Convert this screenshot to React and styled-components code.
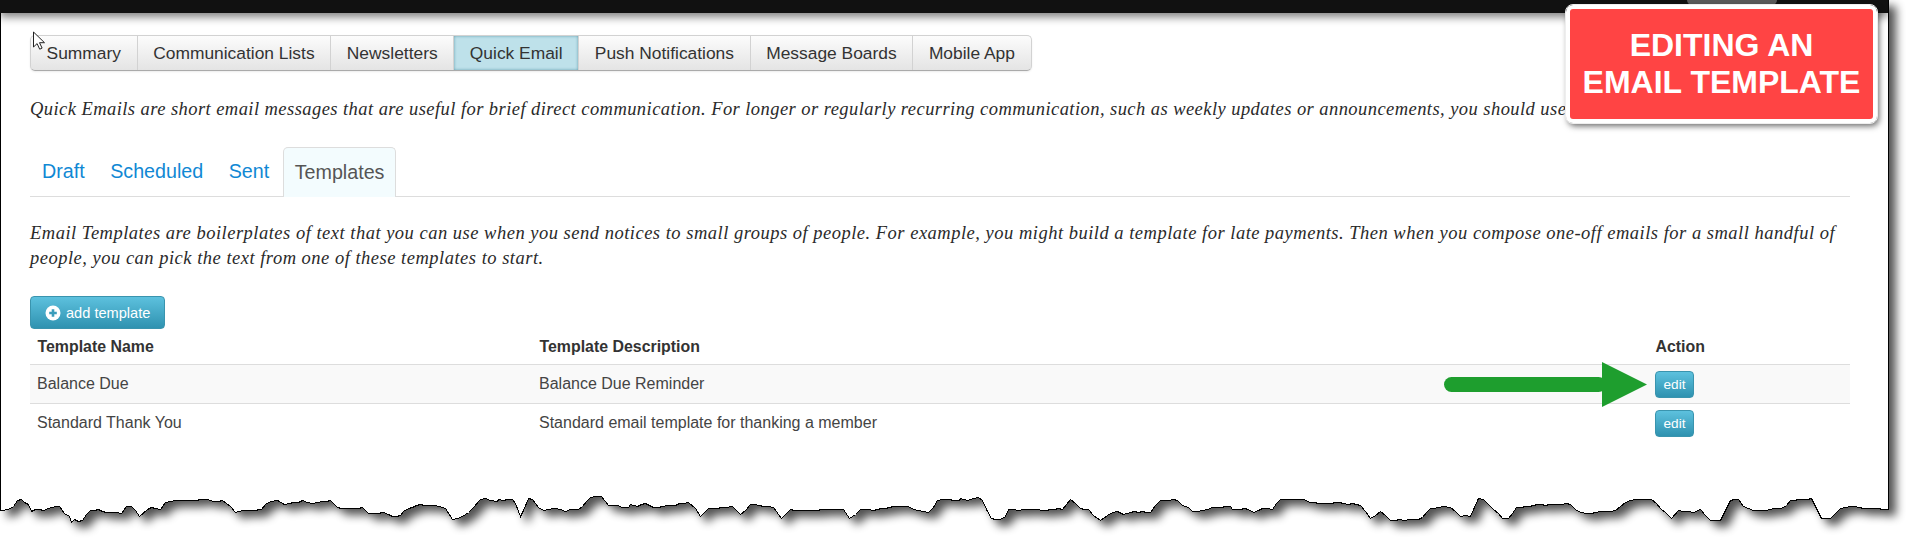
import { Fragment } from "react";
import styled, { createGlobalStyle } from "styled-components";

const GlobalStyle = createGlobalStyle`
  html, body {
    margin: 0;
    background: #fff;
    overflow: hidden;
  }
`;

// torn bottom edge, traced from the picture in 3x strips: [strip offset, x, y, x, y...]
const EDGE_STRIPS = [
  [0, 0,75,10,75,30,70,38,62,50,45,62,43,72,52,85,58,92,78,105,73,130,75,145,70,165,62,178,63,192,85,207,92,213,112,222,103,235,108,245,106,258,88,270,75,295,73,305,79,330,82,362,83,378,63,392,62,405,75,418,92,440,72,452,65,465,68,480,72,495,50,525,45,560,46,600,42,620,43,640,48,665,45,690,63,705,80,725,75,760,75,782,72,795,58,810,47,830,46,852,57,880,52,905,46,935,55,965,48,990,44,1010,65,1035,70,1060,70,1085,66,1105,85,1130,83,1150,82,1175,92,1200,90,1210,78,1235,65,1260,56,1300,60,1335,68,1357,103,1385,93,1420,65,1438,45],
  [480, 0,42,15,40,30,45,50,48,55,43,95,41,105,55,120,92,130,75,145,40,155,42,175,66,190,75,205,71,240,71,255,77,270,72,295,71,305,62,330,37,362,34,385,60,410,60,425,67,445,66,450,58,470,62,495,55,520,65,560,60,610,55,625,50,645,70,660,92,685,70,735,66,755,62,780,88,810,58,850,62,880,65,902,98,930,72,970,75,1010,75,1050,71,1090,73,1108,100,1140,72,1190,73,1240,63,1285,63,1300,72,1345,82,1372,45,1405,41,1438,45],
  [960, 0,40,20,44,55,35,65,45,92,100,120,102,135,93,143,72,175,75,190,72,230,71,245,75,295,70,305,72,330,43,345,55,360,70,385,72,400,90,420,105,440,90,470,77,490,87,510,80,570,80,600,45,650,44,665,60,685,65,695,78,725,75,755,65,810,62,815,72,865,72,880,82,905,68,935,72,960,41,1005,43,1030,42,1050,50,1100,55,1125,50,1200,60,1230,100,1260,77,1290,105,1360,103,1385,95,1410,68,1420,70],
  [1433, 0,70,30,62,50,65,80,92,110,92,135,40,150,42,180,72,207,100,225,100,250,67,300,60,360,57,410,57,430,75,460,85,500,78,545,75,575,50,605,42,655,42,680,70,715,100,735,75,780,80,800,73,830,105,860,105,890,45,915,42,930,63,960,75,1000,75,1020,68,1045,70,1070,45,1135,40,1165,98,1190,100,1220,70,1250,62,1305,68,1362,72],
];

const buildPagePath = () => {
  let seed = 7;
  const noise = () => {
    seed = (seed * 16807) % 2147483647;
    return (seed / 2147483647 - 0.5) * 1.1;
  };
  const points = [];
  EDGE_STRIPS.forEach(([offset, ...coords]) => {
    for (let i = 0; i < coords.length; i += 2) {
      points.push([offset + coords[i] / 3, 485 + coords[i + 1] / 3]);
    }
  });
  const jagged = [];
  points.forEach(([x, y], i) => {
    jagged.push([x, y]);
    const next = points[i + 1];
    if (!next) return;
    const steps = Math.floor((next[0] - x) / 4);
    for (let s = 1; s < steps; s++) {
      const t = s / steps;
      jagged.push([x + (next[0] - x) * t, y + (next[1] - y) * t + noise()]);
    }
  });
  const right = jagged.slice().reverse();
  return `M0.5 0.5 L1888.5 0.5 L1888.5 ${right[0][1].toFixed(0)} ${right
    .map(([x, y]) => `L${Math.round(x)}.5 ${Math.round(y)}.5`)
    .join(" ")} Z`;
};

const PAGE_PATH = buildPagePath();

const MAIN_TABS = [
  "Summary",
  "Communication Lists",
  "Newsletters",
  "Quick Email",
  "Push Notifications",
  "Message Boards",
  "Mobile App",
];
const SUB_TABS = ["Draft", "Scheduled", "Sent", "Templates"];
const TEMPLATES = [
  { name: "Balance Due", description: "Balance Due Reminder" },
  { name: "Standard Thank You", description: "Standard email template for thanking a member" },
];

const Stage = styled.div`
  position: relative;
  width: 1913px;
  height: 552px;
  font-family: "Liberation Sans", Arial, sans-serif;
  color: #444;
`;

const PaperDrawing = styled.svg`
  position: absolute;
  left: 0;
  top: 0;
`;

const Page = styled.div`
  position: relative;
  width: 1888px;
  height: 480px;
  overflow: hidden;
`;

const TopBar = styled.div`
  position: relative;
  height: 13px;
  background: #111;
  box-shadow: 0 4px 9px rgba(0, 0, 0, 0.5);
`;

const BarNotch = styled.div`
  position: absolute;
  left: 1687px;
  top: 0;
  width: 90px;
  height: 5px;
  background: #5a5a5a;
  border-radius: 0 0 14px 14px;
`;

const Content = styled.div`
  padding: 22px 38px 0 30px;
`;

const MainTabs = styled.div`
  display: inline-flex;
  vertical-align: top;
  height: 36px;
  border: 1px solid #d2d2d2;
  border-bottom-color: #aaa;
  border-radius: 5px;
  box-sizing: border-box;
  background: linear-gradient(#fcfcfc, #e4e4e4);
  box-shadow: 0 1px 2px rgba(0, 0, 0, 0.08);
  overflow: hidden;
`;

const MainTab = styled.div`
  display: flex;
  align-items: center;
  padding: 0 15.6px;
  font-size: 17.4px;
  color: #333;
  border-left: ${(p) => (p.$first ? "none" : "1px solid #d2d2d2")};
  background: ${(p) => (p.$active ? "#bee1ea" : "transparent")};
  box-shadow: ${(p) => (p.$active ? "inset 0 0 3px rgba(60, 130, 150, 0.7)" : "none")};
`;

const Intro = styled.p`
  margin: 25px 0 0;
  height: 26px;
  line-height: 26px;
  white-space: nowrap;
  font-family: "Liberation Serif", Georgia, serif;
  font-style: italic;
  font-size: 18.5px;
  letter-spacing: 0.44px;
  color: #2a2a2a;
`;

const SubTabs = styled.div`
  display: flex;
  gap: 1.5px;
  height: 50px;
  margin-top: 25px;
  box-sizing: border-box;
  border-bottom: 1px solid #ddd;
`;

const SubTab = styled.div`
  display: flex;
  align-items: center;
  padding: 0 ${(p) => (p.$active ? "11px" : "12px")};
  font-size: 19.7px;
  color: ${(p) => (p.$active ? "#555" : "#1088d4")};
  height: ${(p) => (p.$active ? "50px" : "49px")};
  box-sizing: border-box;
  background: ${(p) => (p.$active ? "#f3fcfe" : "transparent")};
  border: ${(p) => (p.$active ? "1px solid #ddd" : "none")};
  border-bottom: none;
  border-radius: 5px 5px 0 0;
`;

const Lead = styled.p`
  margin: 24px 0 0;
  width: 1820px;
  line-height: 24.5px;
  font-family: "Liberation Serif", Georgia, serif;
  font-style: italic;
  font-size: 18.5px;
  letter-spacing: 0.5px;
  color: #2a2a2a;
`;

const AddButton = styled.button`
  display: flex;
  align-items: center;
  gap: 5px;
  width: 135px;
  height: 33px;
  margin-top: 26px;
  padding: 0 0 0 14px;
  box-sizing: border-box;
  border: 1px solid #3a94ae;
  border-radius: 4px;
  background: linear-gradient(#5dc1de, #2f92b0);
  color: #fff;
  font-family: inherit;
  font-size: 14.6px;
`;

const TemplateGrid = styled.div`
  display: grid;
  grid-template-columns: 502px 1116px 202px;
  width: 1820px;
`;

const HeadCell = styled.div`
  display: flex;
  align-items: center;
  height: 35px;
  padding-left: 7.5px;
  font-size: 15.9px;
  font-weight: bold;
  color: #333;
  border-bottom: 1px solid #ddd;
`;

const BodyCell = styled.div`
  display: flex;
  align-items: center;
  height: 38px;
  padding-left: 7px;
  font-size: 16px;
  background: ${(p) => (p.$striped ? "#f9f9f9" : "#fff")};
  border-bottom: ${(p) => (p.$striped ? "1px solid #ddd" : "none")};
`;

const EditButton = styled.button`
  width: 39px;
  height: 27px;
  padding: 0;
  border: 1px solid #3a94ae;
  border-radius: 4px;
  background: linear-gradient(#5dc1de, #2f92b0);
  color: #fff;
  font-family: inherit;
  font-size: 13.6px;
`;

const Callout = styled.div`
  position: absolute;
  left: 1566px;
  top: 5px;
  width: 311px;
  height: 118px;
  box-sizing: border-box;
  display: flex;
  align-items: center;
  justify-content: center;
  text-align: center;
  border: 4px solid #fff;
  outline: 1px solid #eee;
  border-radius: 7px;
  background: #ff4444;
  box-shadow: 2px 3px 6px rgba(0, 0, 0, 0.6);
  color: #fff;
  font-size: 32px;
  font-weight: bold;
  line-height: 37px;
`;

const GreenArrow = styled.svg`
  position: absolute;
  left: 1444px;
  top: 362px;
`;

const Pointer = styled.svg`
  position: absolute;
  left: 32px;
  top: 31px;
`;

const PlusBadge = () => (
  <svg width="16" height="16" viewBox="0 0 16 16">
    <circle cx="8" cy="8" r="7.5" fill="#fff" />
    <path d="M8 4.2v7.6M4.2 8h7.6" stroke="#3b9dbb" strokeWidth="2.6" />
  </svg>
);

export default function App() {
  return (
    <>
      <GlobalStyle />
      <Stage>
        <PaperDrawing width="1913" height="552">
          <defs>
            <filter id="paper-shadow" x="-2%" y="-5%" width="104%" height="115%">
              <feGaussianBlur in="SourceAlpha" stdDeviation="5" />
              <feOffset dx="7" dy="6" />
              <feComponentTransfer>
                <feFuncA type="linear" slope="0.68" />
              </feComponentTransfer>
              <feMerge>
                <feMergeNode />
                <feMergeNode in="SourceGraphic" />
              </feMerge>
            </filter>
          </defs>
          <path
            d={PAGE_PATH}
            fill="#fff"
            stroke="#000"
            strokeWidth="1"
            shapeRendering="crispEdges"
            filter="url(#paper-shadow)"
          />
        </PaperDrawing>
        <Page>
          <TopBar>
            <BarNotch />
          </TopBar>
          <Content>
            <MainTabs>
              {MAIN_TABS.map((tab, i) => (
                <MainTab key={tab} $first={i === 0} $active={tab === "Quick Email"}>
                  {tab}
                </MainTab>
              ))}
            </MainTabs>
            <Intro>
              Quick Emails are short email messages that are useful for brief direct communication. For
              longer or regularly recurring communication, such as weekly updates or announcements, you
              should use
            </Intro>
            <SubTabs>
              {SUB_TABS.map((tab) => (
                <SubTab key={tab} $active={tab === "Templates"}>
                  {tab}
                </SubTab>
              ))}
            </SubTabs>
            <Lead>
              Email Templates are boilerplates of text that you can use when you send notices to small
              groups of people. For example, you might build a template for late payments. Then when you
              compose one-off emails for a small handful of people, you can pick the text from one of
              these templates to start.
            </Lead>
            <AddButton>
              <PlusBadge />
              add template
            </AddButton>
            <TemplateGrid>
              <HeadCell>Template Name</HeadCell>
              <HeadCell>Template Description</HeadCell>
              <HeadCell>Action</HeadCell>
              {TEMPLATES.map((t, i) => (
                <Fragment key={t.name}>
                  <BodyCell $striped={i === 0}>{t.name}</BodyCell>
                  <BodyCell $striped={i === 0}>{t.description}</BodyCell>
                  <BodyCell $striped={i === 0}>
                    <EditButton>edit</EditButton>
                  </BodyCell>
                </Fragment>
              ))}
            </TemplateGrid>
          </Content>
          <GreenArrow width="203" height="45" viewBox="0 0 203 45">
            <rect x="0" y="15" width="162" height="15" rx="7.5" fill="#1e9e2e" />
            <polygon points="158,0 203,22.5 158,45" fill="#1e9e2e" />
          </GreenArrow>
          <Pointer width="14" height="20" viewBox="0 0 14 20">
            <path
              d="M1.5 1v15l3.6-3.4 2.6 5.6 2.4-1.1-2.6-5.4h5z"
              fill="#fff"
              stroke="#222"
              strokeWidth="1"
            />
          </Pointer>
          <Callout>
            EDITING AN
            <br />
            EMAIL TEMPLATE
          </Callout>
        </Page>
      </Stage>
    </>
  );
}
